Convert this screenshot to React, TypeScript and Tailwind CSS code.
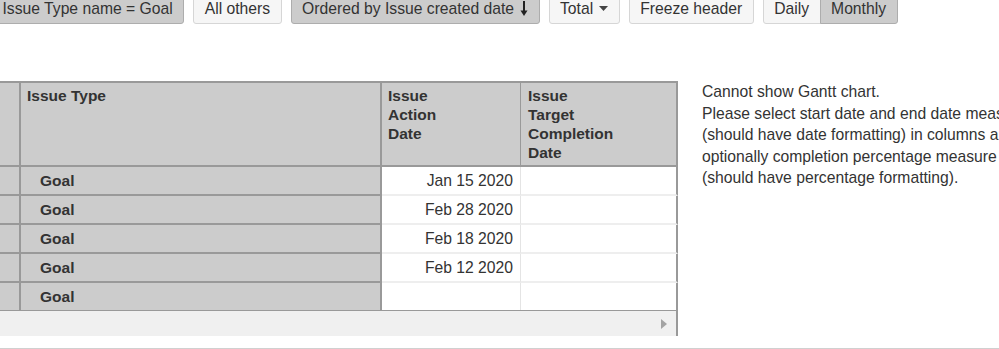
import React from "react";

const font = { fontFamily: '"Liberation Sans", Arial, sans-serif' };

const dates = ["Jan 15 2020", "Feb 28 2020", "Feb 18 2020", "Feb 12 2020", ""];

function Btn({ active, children, className = "" }: { active?: boolean; children: React.ReactNode; className?: string }) {
  return (
    <div
      className={
        "flex items-center h-[31px] px-[10.5px] border rounded-[3px] text-[15.7px] text-[#333] whitespace-nowrap " +
        (active ? "bg-[#cccccc] border-[#adadad] " : "bg-[#f6f6f6] border-[#d6d6d6] ") +
        className
      }
    >
      {children}
    </div>
  );
}

export default function App() {
  return (
    <div className="w-[999px] h-[349px] overflow-hidden bg-white text-[#333]" style={font}>
      <div className="flex items-center gap-[9px] -mt-[7px] -ml-[9px]">
        <Btn active>Issue Type name = Goal</Btn>
        <Btn>All others</Btn>
        <Btn active className="gap-[6px]">
          Ordered by Issue created date
          <svg width="8" height="15" viewBox="0 0 8 15">
            <path d="M4 0v11" stroke="#222" strokeWidth="2" />
            <path d="M0.5 9.5h7L4 15z" fill="#222" />
          </svg>
        </Btn>
        <Btn className="gap-[6px]">
          Total
          <svg width="9" height="5" viewBox="0 0 9 5">
            <path d="M0 0h9L4.5 5z" fill="#444" />
          </svg>
        </Btn>
        <Btn>Freeze header</Btn>
        <div className="flex">
          <Btn className="rounded-r-none">Daily</Btn>
          <Btn active className="rounded-l-none -ml-px">Monthly</Btn>
        </div>
      </div>

      <div className="flex mt-[57px] gap-[24px]">
        <div className="flex flex-col -ml-[10px] w-[688px] shrink-0">
          <div className="flex border-t-2 border-[#999] text-[15.5px] font-bold leading-[19px]">
            <div className="w-[31px] h-[84px] bg-[#cccccc] border-r-2 border-b-2 border-[#999]" />
            <div className="w-[361px] h-[84px] bg-[#cccccc] border-r-2 border-b-2 border-[#999] pl-[6px] pt-[3px]">
              Issue Type
            </div>
            <div className="w-[139px] h-[84px] bg-[#cccccc] border-r border-b-2 border-[#999] pl-[6px] pt-[3px]">
              Issue<br />Action<br />Date
            </div>
            <div className="w-[157px] h-[84px] bg-[#cccccc] border-r-2 border-b-2 border-[#999] pl-[7px] pt-[3px]">
              Issue<br />Target<br />Completion<br />Date
            </div>
          </div>
          {dates.map((d, i) => (
            <div key={i} className="flex h-[29px] text-[15.7px]">
              <div className="w-[31px] bg-[#cccccc] border-r-2 border-b-2 border-[#999]" />
              <div className="w-[361px] bg-[#cccccc] border-r-2 border-b-2 border-[#999] pl-[19px] flex items-center font-bold text-[15.5px]">
                Goal
              </div>
              <div className="w-[139px] border-r border-b-2 border-r-[#e4e4e4] border-b-[#eeeeee] flex items-center justify-end pr-[7px]">
                {d}
              </div>
              <div className="w-[157px] border-r-2 border-r-[#999] border-b-2 border-b-[#eeeeee]" />
            </div>
          ))}
          <div className="flex h-[26px] bg-[#f0f0f0] border-t border-[#999] -mt-[2px] border-r-2 border-r-[#999] items-center justify-end pr-[9px]">
            <svg width="6" height="10" viewBox="0 0 6 10">
              <path d="M0 0l6 5-6 5z" fill="#a3a3a3" />
            </svg>
          </div>
        </div>

        <div className="text-[15.7px] leading-[21.5px] whitespace-nowrap">
          Cannot show Gantt chart.<br />
          Please select start date and end date measures<br />
          (should have date formatting) in columns and<br />
          optionally completion percentage measure<br />
          (should have percentage formatting).
        </div>
      </div>

      <div className="mt-[12px] h-px bg-[#d0d0d0]" />
    </div>
  );
}
